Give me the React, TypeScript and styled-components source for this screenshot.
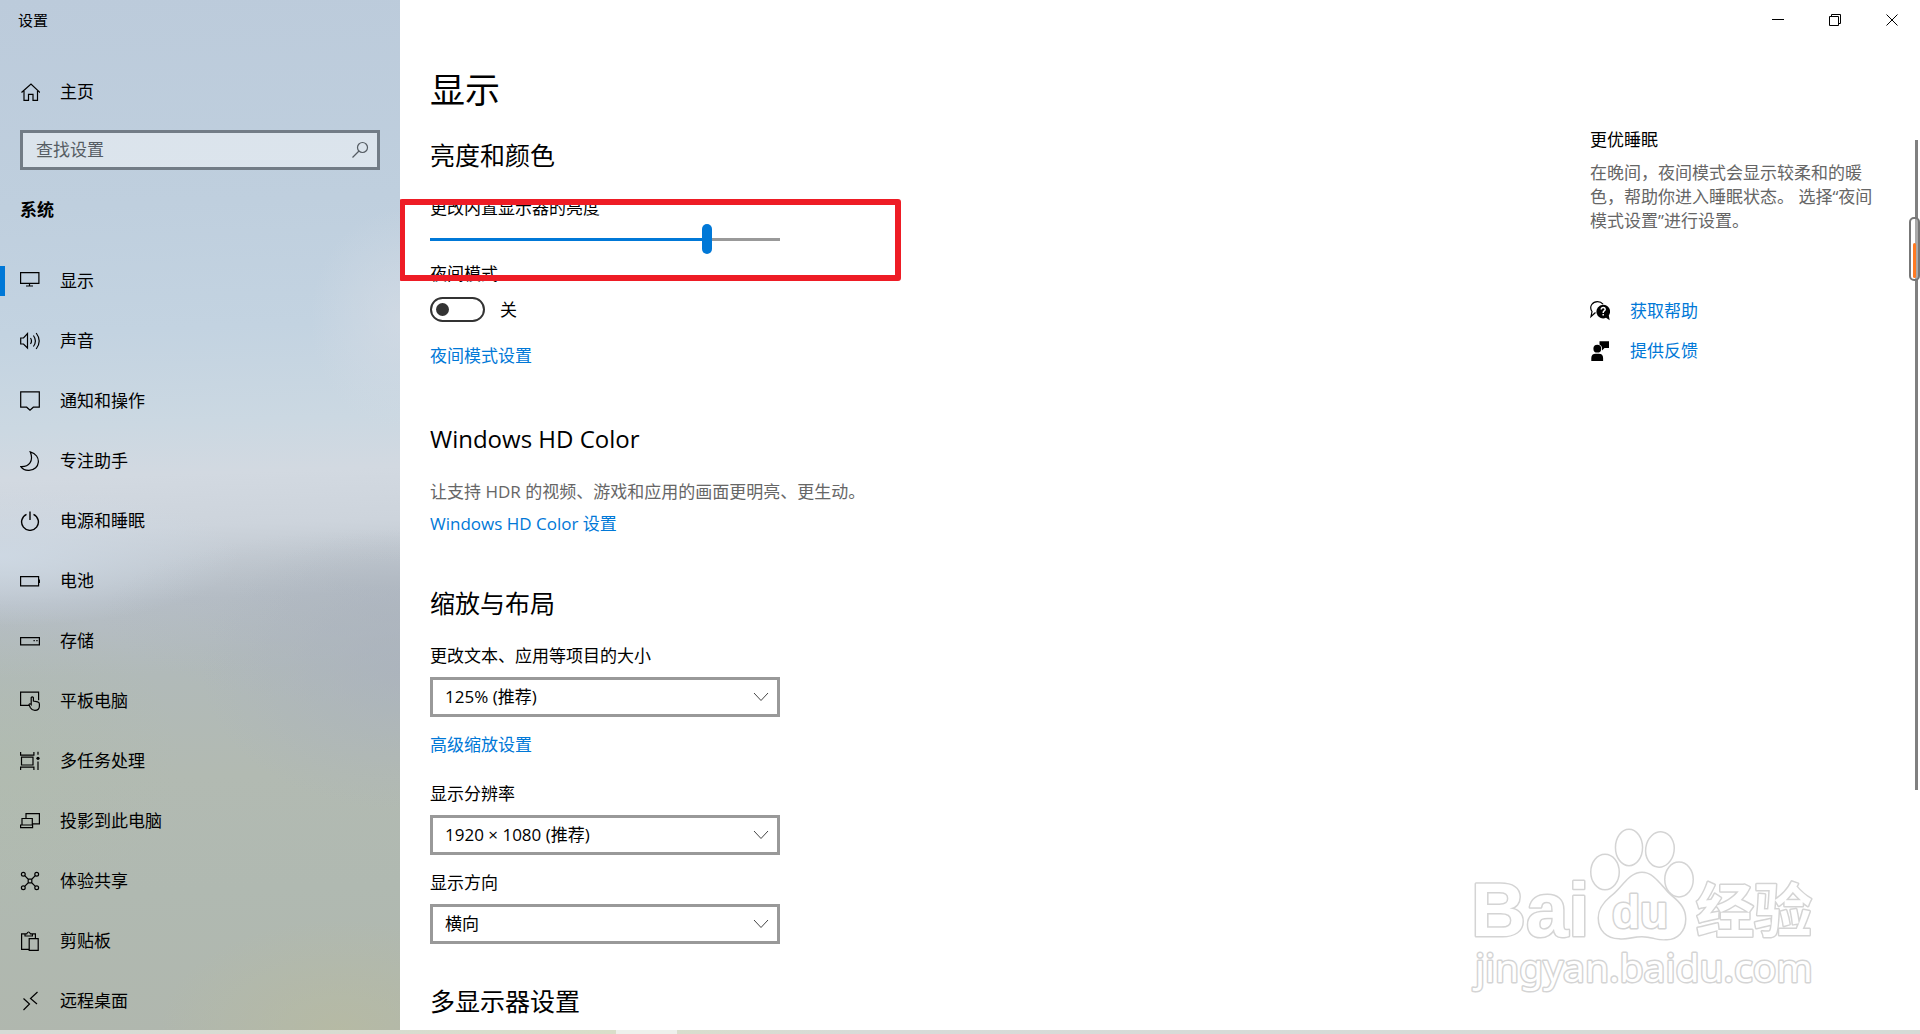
import React, { useState } from "react";
import styled, { createGlobalStyle } from "styled-components";

const accent = "#0078d7";
const fontStack = '"Open Sans", "Noto Sans CJK SC", sans-serif';

const GlobalStyle = createGlobalStyle`
  *, *::before, *::after { box-sizing: border-box; }
  body {
    margin: 0;
    background: #fff;
    color: #000;
    font-family: ${fontStack};
    font-size: 17px;
    line-height: 24px;
    overflow: hidden;
  }
  h1, h2, h3, p { margin: 0; font-weight: 400; }
  input, select, button { font: inherit; color: inherit; }
`;

const Shell = styled.div`
  position: relative;
  display: grid;
  grid-template-columns: 400px minmax(0, 1fr);
  grid-template-rows: minmax(0, 1fr) 4px;
  height: 100vh;
  overflow: hidden;
`;

/* ---------- sidebar ---------- */

const Sidebar = styled.aside`
  display: flex;
  flex-direction: column;
  overflow: hidden;
  background:
    radial-gradient(ellipse 180px 110px at 85% 100%, rgba(184, 187, 160, 0.7), transparent),
    radial-gradient(ellipse 200px 140px at 100% 65%, rgba(170, 178, 190, 0.7), transparent),
    radial-gradient(ellipse 300px 90px at 100% 60%, rgba(174, 182, 190, 0.6), transparent),
    radial-gradient(ellipse 240px 70px at 0% 54%, rgba(206, 217, 228, 0.9), transparent),
    radial-gradient(ellipse 180px 160px at 0% 74%, rgba(176, 188, 174, 0.5), transparent),
    radial-gradient(ellipse 90px 110px at 100% 31%, rgba(212, 219, 228, 0.7), transparent),
    linear-gradient(
      178deg,
      #bccbdb 0%,
      #bfcfde 20%,
      #c3d3e1 32%,
      #cbd8e2 41%,
      #d2d9e1 46%,
      #cdd4dc 51%,
      #b6bec6 58%,
      #b1bab9 65%,
      #b2bab2 75%,
      #b0b9b1 86%,
      #b0b7ae 100%
    );
`;

const AppTitle = styled.div`
  flex: none;
  height: 40px;
  padding-left: 18px;
  font-size: 15px;
  line-height: 40px;
`;

const NavLink = styled.a<{ $active?: boolean }>`
  display: flex;
  align-items: center;
  gap: 20px;
  flex: none;
  height: 60px;
  padding-left: 20px;
  color: #000;
  text-decoration: none;

  &::before {
    content: "";
    display: ${(p) => (p.$active ? "block" : "none")};
    width: 5px;
    height: 30px;
    margin-left: -20px;
    margin-right: -5px;
    background: ${accent};
  }
`;

const HomeArea = styled.div`
  flex: none;
  padding: 22px 0 8px;
`;

const SearchBox = styled.form`
  display: flex;
  flex: none;
  align-items: center;
  height: 40px;
  margin: 0 20px;
  padding: 0 7px 0 13px;
  border: 3px solid #727c86;
  background: rgba(255, 255, 255, 0.45);
  color: #555c63;
`;

const SearchInput = styled.input`
  flex: 1;
  min-width: 0;
  padding: 0;
  border: 0;
  outline: 0;
  background: transparent;
  &::placeholder { color: #555c63; opacity: 1; }
`;

const PlainButton = styled.button`
  display: flex;
  padding: 0;
  border: 0;
  background: transparent;
`;

const GroupTitle = styled.h3`
  flex: none;
  padding: 28px 20px 29px;
  font-size: 17px;
  line-height: 24px;
  font-weight: 700;
`;

const NavList = styled.nav`
  display: flex;
  flex: none;
  flex-direction: column;
`;

const Icon = styled.svg`
  flex: none;
  width: 20px;
  height: 20px;
  fill: none;
  stroke: currentColor;
  stroke-width: 1.2;
`;

/* ---------- main ---------- */

const Main = styled.main`
  display: flex;
  flex-direction: column;
  min-width: 0;
  overflow: hidden;
`;

const WindowBar = styled.header`
  display: flex;
  flex: none;
  justify-content: flex-end;
  height: 40px;
`;

const WindowButton = styled(PlainButton)`
  align-items: center;
  justify-content: center;
  width: 57px;
  svg { width: 12px; height: 12px; fill: none; stroke: #000; }
`;

const Columns = styled.div`
  display: flex;
  flex: none;
  justify-content: space-between;
  padding: 26px 44px 0 30px;
`;

const Settings = styled.div`
  display: flex;
  flex-direction: column;
  align-items: flex-start;
`;

const PageTitle = styled.h1`
  font-size: 35px;
  line-height: 48px;
`;

const Section = styled.section<{ $top: number }>`
  position: relative;
  display: flex;
  flex-direction: column;
  align-items: flex-start;
  margin-top: ${(p) => p.$top}px;
`;

const SectionTitle = styled.h2<{ $latin?: boolean }>`
  margin-bottom: 24px;
  font-size: ${(p) => (p.$latin ? 24 : 25)}px;
  line-height: 34px;
`;

const FieldLabel = styled.label`
  display: block;
  margin-bottom: 9px;
`;

const Slider = styled.input<{ $fill: number }>`
  appearance: none;
  width: 350px;
  height: 30px;
  margin: -5px 0 8px;
  background: linear-gradient(to right, ${accent} ${(p) => p.$fill}%, #999 ${(p) => p.$fill}%)
    center / 100% 3px no-repeat;

  &::-webkit-slider-thumb {
    appearance: none;
    width: 10px;
    height: 30px;
    border-radius: 5px;
    background: ${accent};
  }
`;

const ToggleRow = styled.div`
  display: flex;
  align-items: center;
  gap: 15px;
  height: 25px;
  margin: 2px 0 22px;
`;

const Toggle = styled.input`
  appearance: none;
  display: flex;
  align-items: center;
  width: 55px;
  height: 25px;
  margin: 0;
  padding-left: 4px;
  border: 2px solid #333;
  border-radius: 13px;

  &::before {
    content: "";
    width: 13px;
    height: 13px;
    border-radius: 50%;
    background: #333;
  }
  &:checked { justify-content: flex-end; padding: 0 4px 0 0; }
`;

const TextLink = styled.a`
  color: ${accent};
  text-decoration: none;
`;

const Muted = styled.p`
  margin-bottom: 8px;
  color: #666;
`;

const Field = styled.div`
  margin-bottom: 16px;
`;

const SelectWrap = styled.div`
  position: relative;
  width: 350px;

  svg {
    position: absolute;
    top: 15px;
    right: 11px;
    width: 16px;
    height: 10px;
    fill: none;
    stroke: #444;
    pointer-events: none;
  }
`;

const Select = styled.select`
  appearance: none;
  display: block;
  width: 100%;
  height: 40px;
  padding: 0 40px 0 12px;
  border: 3px solid #999;
  border-radius: 0;
  background: #fff;
`;

const Highlight = styled.div`
  position: absolute;
  top: 61px;
  left: -31px;
  width: 502px;
  height: 82px;
  border: 6px solid #ee1c25;
  border-radius: 3px;
  pointer-events: none;
`;

const Help = styled.aside`
  width: 286px;
  padding-top: 62px;
`;

const HelpTitle = styled.h3`
  font-size: 17px;
`;

const HelpText = styled(Muted)`
  margin: 9px 0 58px;
`;

const HelpLink = styled(TextLink)`
  display: flex;
  align-items: center;
  gap: 20px;
  height: 40px;
  svg { color: #000; }
`;

/* ---------- overlays ---------- */

const ScrollBar = styled.div`
  position: absolute;
  top: 140px;
  right: 2px;
  width: 3px;
  height: 650px;
  background: #808080;
`;

const FloatingMeter = styled.div`
  position: absolute;
  top: 217px;
  right: 0;
  display: flex;
  align-items: flex-end;
  width: 11px;
  height: 64px;
  padding: 0 2px 1px;
  border: 2px solid #777;
  border-radius: 5px;
  background: linear-gradient(to right, #fff 4px, #aaa 4px);
`;

const MeterFill = styled.div`
  width: 4px;
  height: 35px;
  border-radius: 2px;
  background: #ff7a22;
`;

const Watermark = styled.svg`
  position: absolute;
  right: 90px;
  bottom: 29px;
  width: 360px;
  height: 180px;
  pointer-events: none;
  fill: #fff;
  stroke: #d4d4d4;
  stroke-width: 3;
  stroke-linejoin: round;
  paint-order: stroke;
`;

const BottomStrip = styled.div`
  grid-column: 1 / -1;
  background:
    linear-gradient(#eef0ec, #eef0ec) 616px 0 / 61px 4px no-repeat,
    linear-gradient(to right, #d6dbd6, #d8dcd0 20%, #d9dec9 32%, #d8dbd8 45%, #d5dbd6 100%);
`;

const glyphs: Record<string, React.ReactNode> = {
  home: <path d="M1.5 10.5 11 2l9 8.500M4 9v9.400h4.500v-6h4.500v6h4.500V9" />,
  display: <path d="M.6 1.600h18.300v10.800H.6zM9.500 12.400v2.400M6 15h7" />,
  sound: (
    <path d="M.7 7v6h2.800l4 4V2.500l-4 4.500zM10.500 7q2 3 0 6M13.400 4.500q4 5.500 0 11M16.200 2q6 8 0 16" />
  ),
  message: <path d="M.7.8h18.600v15.400h-6l-3.300 3-3.300-3h-6z" />,
  moon: <path d="M10.200.8C22 4 20.500 19 9 19.400 5.500 19.500 2.500 18 .8 15.600 9 16 14 10 10.200.8z" />,
  power: <path d="M6.500 3.300a8.400 8.400 0 1 0 7 0M10 .5v8.500" strokeWidth="1.400" />,
  battery: (
    <>
      <path d="M.6 5.600h18v9.200h-18z" />
      <path d="M19.400 8.500v3.500" />
    </>
  ),
  storage: (
    <>
      <path d="M.6 6.600h18.800v7.200H.6z" />
      <path d="M13.500 9.700h1.300M16.300 9.700h1.300" />
    </>
  ),
  tablet: (
    <path d="M9 14.400H.6V1.200h18v8M11.200 13V6.600q1.100-1.500 2.200 0V10l4.200.8q1.800.5 1.800 2.200v2q0 4.400-4.500 4.400-3 0-4.500-2.600L9 13.500q.8-1.500 2.200 0z" />
  ),
  multitask: (
    <>
      <path d="M.6 1v3.200h13.300V1M.6 19v-2.800h13.300V19M1.500 6.200H13v7.800H1.500zM18 .8v3M18 10.500V19" />
      <circle cx="18" cy="7.300" r="1.600" fill="currentColor" stroke="none" />
    </>
  ),
  project: <path d="M6 7V2.600h13.400v10.200h-7M2 14V7.500h10.300V14M.6 14h12v2.600H.6z" />,
  share: (
    <>
      <path d="m4.700 4.700 3.800 3.800M15.300 4.700l-3.800 3.800M4.700 15.300l3.800-3.800M15.300 15.300l-3.800-3.800M8.200 8.200h3.600v3.600H8.200z" />
      <circle cx="3.300" cy="3.300" r="1.900" />
      <circle cx="16.700" cy="3.300" r="1.900" />
      <circle cx="3.300" cy="16.700" r="1.900" />
      <circle cx="16.700" cy="16.700" r="1.900" />
    </>
  ),
  clipboard: (
    <path d="M9 18.400H1.600V2.800h3.200M12.500 2.800h2.900V7M5 5V2.800h1.800q1.700-3.600 3.600 0h2V5zM9.200 7.600h9V19.300h-9z" />
  ),
  remote: <path d="m3.500 7.500 6 5.500-6 6M17.500 1l-7 6.500 6.500 5.500" />,
};

const Glyph = ({ name }: { name: string }) => (
  <Icon viewBox="0 0 20 20" aria-hidden="true">
    {glyphs[name]}
  </Icon>
);

const navItems: [string, string][] = [
  ["display", "显示"],
  ["sound", "声音"],
  ["message", "通知和操作"],
  ["moon", "专注助手"],
  ["power", "电源和睡眠"],
  ["battery", "电池"],
  ["storage", "存储"],
  ["tablet", "平板电脑"],
  ["multitask", "多任务处理"],
  ["project", "投影到此电脑"],
  ["share", "体验共享"],
  ["clipboard", "剪贴板"],
  ["remote", "远程桌面"],
];

const Dropdown = ({ id, label, value }: { id: string; label: string; value: string }) => (
  <Field>
    <FieldLabel htmlFor={id}>{label}</FieldLabel>
    <SelectWrap>
      <Select id={id} defaultValue={value}>
        <option>{value}</option>
      </Select>
      <svg viewBox="0 0 16 10" aria-hidden="true">
        <path d="m1 1 7 7.500L15 1" />
      </svg>
    </SelectWrap>
  </Field>
);

export default function App() {
  const [brightness, setBrightness] = useState(80);

  return (
    <>
      <GlobalStyle />
      <Shell>
        <Sidebar>
          <AppTitle>设置</AppTitle>
          <HomeArea>
            <NavLink href="#home">
              <Glyph name="home" />
              主页
            </NavLink>
          </HomeArea>
          <SearchBox onSubmit={(e) => e.preventDefault()}>
            <SearchInput type="text" placeholder="查找设置" aria-label="查找设置" />
            <PlainButton type="submit" aria-label="搜索">
              <Icon viewBox="0 0 20 20" aria-hidden="true">
                <circle cx="12.500" cy="7.500" r="5" />
                <path d="M9 11 2.500 17.500" />
              </Icon>
            </PlainButton>
          </SearchBox>
          <GroupTitle>系统</GroupTitle>
          <NavList>
            {navItems.map(([icon, label]) => (
              <NavLink key={icon} href={`#${icon}`} $active={icon === "display"}>
                <Glyph name={icon} />
                {label}
              </NavLink>
            ))}
          </NavList>
        </Sidebar>

        <Main>
          <WindowBar>
            <WindowButton type="button" aria-label="最小化">
              <svg viewBox="0 0 12 12"><path d="M0 5.500h12" /></svg>
            </WindowButton>
            <WindowButton type="button" aria-label="还原">
              <svg viewBox="0 0 12 12"><path d="M.5 2.500h9v9h-9zM2.500 2.500v-2h9v9h-2" /></svg>
            </WindowButton>
            <WindowButton type="button" aria-label="关闭">
              <svg viewBox="0 0 12 12"><path d="m.5.5 11 11M11.500.5l-11 11" /></svg>
            </WindowButton>
          </WindowBar>

          <Columns>
            <Settings>
              <PageTitle>显示</PageTitle>

              <Section $top={24}>
                <SectionTitle>亮度和颜色</SectionTitle>
                <FieldLabel htmlFor="brightness">更改内置显示器的亮度</FieldLabel>
                <Slider
                  id="brightness"
                  type="range"
                  min={0}
                  max={100}
                  value={brightness}
                  $fill={brightness}
                  onChange={(e) => setBrightness(Number(e.target.value))}
                />
                <FieldLabel htmlFor="night">夜间模式</FieldLabel>
                <ToggleRow>
                  <Toggle id="night" type="checkbox" role="switch" />
                  <span>关</span>
                </ToggleRow>
                <TextLink href="#night-settings">夜间模式设置</TextLink>
                <Highlight />
              </Section>

              <Section $top={54}>
                <SectionTitle $latin>Windows HD Color</SectionTitle>
                <Muted>让支持 HDR 的视频、游戏和应用的画面更明亮、更生动。</Muted>
                <TextLink href="#hd-color">Windows HD Color 设置</TextLink>
              </Section>

              <Section $top={50}>
                <SectionTitle>缩放与布局</SectionTitle>
                <Dropdown id="scale" label="更改文本、应用等项目的大小" value="125% (推荐)" />
                <Field>
                  <TextLink href="#advanced-scale">高级缩放设置</TextLink>
                </Field>
              </Section>

              <Section $top={9}>
                <Dropdown id="resolution" label="显示分辨率" value="1920 × 1080 (推荐)" />
                <Dropdown id="orientation" label="显示方向" value="横向" />
              </Section>

              <Section $top={24}>
                <SectionTitle>多显示器设置</SectionTitle>
              </Section>
            </Settings>

            <Help>
              <HelpTitle>更优睡眠</HelpTitle>
              <HelpText>
                在晚间，夜间模式会显示较柔和的暖色，帮助你进入睡眠状态。 选择“夜间模式设置”进行设置。
              </HelpText>
              <HelpLink href="#help">
                <Icon viewBox="0 0 20 20" aria-hidden="true">
                  <path d="M5.500 11.500 1 15.500 2 10.500C-1.500 5 3 .6 7.500.6q3.500 0 5.500 2.600" />
                  <path
                    d="M13 3.800a6.800 6.800 0 1 0 3 13L19.700 19.300 18.800 14.500A6.800 6.800 0 0 0 13 3.800z"
                    fill="currentColor"
                    stroke="none"
                  />
                  <path d="M11.200 8.500q.2-2 2-2t2 1.700q0 1-1 1.700t-1 2M13.200 13v1.500" stroke="#fff" strokeWidth="1.500" />
                </Icon>
                获取帮助
              </HelpLink>
              <HelpLink href="#feedback">
                <Icon viewBox="0 0 20 20" aria-hidden="true">
                  <g fill="currentColor" stroke="none">
                    <circle cx="7.300" cy="7.700" r="3.900" />
                    <path d="M1.300 20v-3q0-4.300 4.500-4.300h3q4.300 0 4.300 4.300v3zM9.500.3H19v6.800h-4.500L12 9.500V7q0-2.500-2.500-3.500z" />
                  </g>
                </Icon>
                提供反馈
              </HelpLink>
            </Help>
          </Columns>
        </Main>

        <BottomStrip />
        <ScrollBar />
        <FloatingMeter>
          <MeterFill />
        </FloatingMeter>

        <Watermark viewBox="0 0 360 180" aria-hidden="true">
          <text x="1" y="111" fontFamily="Liberation Sans, sans-serif" fontWeight="700" fontSize="76">Bai</text>
          <ellipse cx="135" cy="47" rx="13.500" ry="17" />
          <ellipse cx="159" cy="22.500" rx="12.800" ry="17.500" />
          <ellipse cx="190" cy="24.500" rx="13.500" ry="17" transform="rotate(8 190 24)" />
          <ellipse cx="209" cy="54.500" rx="13.500" ry="16.700" />
          <path d="M172 48C184 48 191 62 201 71 211 79 215 85 215 94 215 106 207 114 197 114 187 115 182 111 172 111 163 111 157 114 149 113 137 113 129 105 129 93 129 84 134 78 141 72 153 63 159 48 172 48z" />
          <text x="142" y="103" fontFamily="Liberation Sans, sans-serif" fontWeight="700" fontSize="46">du</text>
          <text x="226" y="107" fontFamily="Noto Sans CJK SC, sans-serif" fontWeight="700" fontSize="58">经验</text>
          <text x="5" y="157" fontFamily="Noto Sans, sans-serif" fontSize="39">jingyan.baidu.com</text>
        </Watermark>
      </Shell>
    </>
  );
}
